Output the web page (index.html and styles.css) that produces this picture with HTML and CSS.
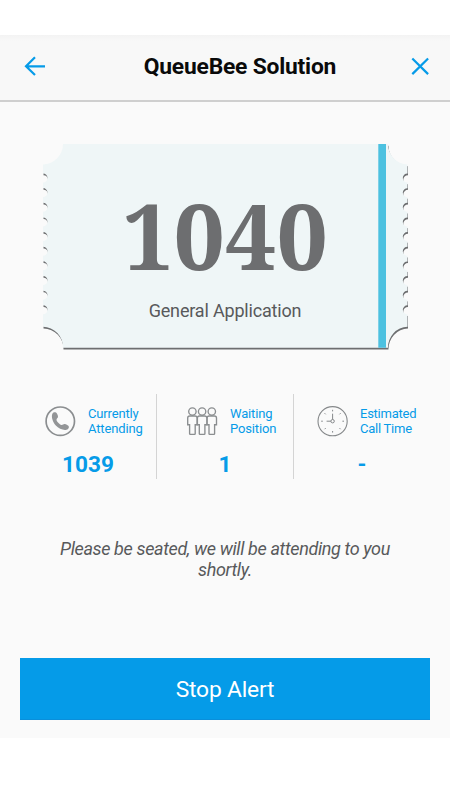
FILE: index.html
```html
<!DOCTYPE html>
<html lang="en">
<head>
<meta charset="utf-8">
<title>QueueBee Solution</title>
<link rel="stylesheet" href="styles.css">
</head>
<body>
<main class="screen">
  <header class="bar">
    <svg class="icon" width="22" height="22" viewBox="0 0 22 22"><path d="M21 11.3H2.5M11 2.2L2 11.3l9 8.7"/></svg>
    <h1 class="title">QueueBee Solution</h1>
    <svg class="icon" width="20" height="20" viewBox="0 0 20 20"><path d="M2.3 2.5l15.8 15.6M18.1 2.5L2.3 18.1"/></svg>
  </header>
  <section class="ticket">
    <svg class="ticket-shape" width="366" height="207" viewBox="0 0 366 207">
      <defs>
        <path id="stub" d="M20 0H345A20.5 20.5 0 0 0 364.5 20.5V29.5a4.7 4.5 0 0 0 0 9v5.65a4.7 4.5 0 0 0 0 9v5.65a4.7 4.5 0 0 0 0 9v5.65a4.7 4.5 0 0 0 0 9v5.65a4.7 4.5 0 0 0 0 9v5.65a4.7 4.5 0 0 0 0 9v5.65a4.7 4.5 0 0 0 0 9v5.65a4.7 4.5 0 0 0 0 9v5.65a4.7 4.5 0 0 0 0 9v5.65a4.7 4.5 0 0 0 0 9V182.7A20.5 20.5 0 0 0 345 203.7H20A20.5 20.5 0 0 0 0 182.7V170.3a4.5 4.5 0 0 0 0-9v-5.65a4.5 4.5 0 0 0 0-9v-5.65a4.5 4.5 0 0 0 0-9v-5.65a4.5 4.5 0 0 0 0-9v-5.65a4.5 4.5 0 0 0 0-9v-5.65a4.5 4.5 0 0 0 0-9v-5.65a4.5 4.5 0 0 0 0-9v-5.65a4.5 4.5 0 0 0 0-9v-5.65a4.5 4.5 0 0 0 0-9v-5.65a4.5 4.5 0 0 0 0-9V20.5A20.5 20.5 0 0 0 20 0z"/>
      </defs>
      <use href="#stub" x=".5" y="1.7" fill="#6d6e70"/>
      <use href="#stub" fill="#eff6f7"/>
      <path d="M335.3 0h7.7v203.7h-7.7z" fill="#4cc1e0"/>
    </svg>
    <div class="ticket-text">
      <div class="number">1040</div>
      <div class="service">General Application</div>
    </div>
  </section>
  <section class="stats">
    <div class="stat">
      <div class="stat-head">
        <svg width="32" height="32" viewBox="0 0 32 32"><circle cx="16.3" cy="15.2" r="14.2" fill="none" stroke="#8b8e90" stroke-width="1.7"/><path transform="translate(.2 -.8)" d="M8.2 8.5c.9-1.6 2.6-1.7 3.6-1.1 1 .7 2.2 3.2 2 4.4-.2 1.1-1.5 1.6-1.5 2.7 0 1.7 3.1 4.9 5 5.2 1.2.2 2-1.1 3.2-.9 1.3.2 4 1.5 4.2 2.7.2 1.4-1.1 2.8-2.5 3.1-3 .8-7.8-1.2-10.6-4.2-2.9-3.1-4.9-9.2-3.4-11.9z" fill="#939597"/></svg>
        <span class="label">Currently<br>Attending</span>
      </div>
      <div class="value">1039</div>
    </div>
    <div class="stat">
      <div class="stat-head">
        <svg width="32" height="32" viewBox="0 0 32 32">
          <defs><g id="person"><circle cx="6.4" cy="5.5" r="3.7"/><path d="M3.8 10h5.2q2.1 0 2.1 2v6.7H9.2v9q0 .7-.7.7H4.3q-.7 0-.7-.7v-9H1.7v-6.7q0-2 2.1-2z"/></g></defs>
          <g fill="#fafafa" stroke="#8b8e90" stroke-width="1.35"><use href="#person" x="0"/><use href="#person" x="19.4"/><use href="#person" x="9.7"/></g>
        </svg>
        <span class="label">Waiting<br>Position</span>
      </div>
      <div class="value">1</div>
    </div>
    <div class="stat">
      <div class="stat-head">
        <svg width="32" height="32" viewBox="0 0 32 32" fill="none" stroke="#85888a"><g transform="translate(-.4 -.8)"><circle cx="16" cy="16" r="14.6" stroke-width="1.1"/><circle cx="16" cy="16" r="1.7" fill="#fafafa"/><path d="M16 14.3V8.5M14.3 16H10"/><path d="M16 4.6v1.6M16 25.8v1.6M4.6 16h1.6M25.8 16h1.6M8 8l1.1 1.1M22.9 22.9L24 24M8 24l1.1-1.1M22.9 9.1L24 8"/></g></svg>
        <span class="label">Estimated<br>Call Time</span>
      </div>
      <div class="value">-</div>
    </div>
  </section>
  <p class="message">Please be seated, we will be attending to you shortly.</p>
  <button class="stop">Stop Alert</button>
</main>
</body>
</html>
```

FILE: styles.css
```css
* { box-sizing: border-box; }

body {
  margin: 0;
  padding-top: 35px;
  background: #fff;
  font-family: Roboto, "Liberation Sans", sans-serif;
}

.screen {
  height: 703px;
  background: #fafafa;
}

.bar {
  display: grid;
  grid-template-columns: 22px 1fr 20px;
  align-items: center;
  height: 67px;
  padding: 0 20px 4px 24px;
  background: linear-gradient(#f3f3f3, #f8f8f8 6px);
  border-bottom: 2px solid #cfcfcf;
}

.title {
  margin: 0;
  padding: 3px 0 0 24px;
  font-size: 22.8px;
  line-height: 28px;
  font-weight: 700;
  letter-spacing: -.2px;
  text-align: center;
  color: #0a0a0a;
  white-space: nowrap;
}

.icon {
  display: block;
  fill: none;
  stroke: #069be8;
  stroke-width: 2.2;
}

.ticket {
  display: grid;
  width: 366px;
  height: 207px;
  margin: 42px 0 0 43px;
}

.ticket-shape,
.ticket-text {
  grid-area: 1 / 1;
}

.ticket-text {
  text-align: center;
  padding: 36px 2px 0 0;
}

.number {
  height: 110px;
  line-height: 110px;
  font-family: "Droid Serif", "Noto Serif", "DejaVu Serif Condensed", "DejaVu Serif", serif;
  font-size: 91px;
  font-weight: 700;
  color: #6d6e70;
}

.service {
  margin-top: 10px;
  font-size: 18px;
  line-height: 22px;
  letter-spacing: -.18px;
  color: #58595b;
}

.stats {
  display: grid;
  grid-template-columns: 136px 137px 137px;
  height: 85px;
  margin: 43px 0 0 20px;
}

.stat + .stat {
  border-left: 1px solid #d4d4d4;
}

.stat-head {
  display: flex;
  align-items: center;
  gap: 12px;
  padding: 12px 0 0 24px;
}

.stat + .stat .stat-head { padding-left: 29px; }
.stat:last-child .stat-head { padding-left: 23px; gap: 11px; }

.label {
  font-size: 13px;
  line-height: 14.6px;
  letter-spacing: -.15px;
  color: #069be8;
  white-space: nowrap;
}

.stat:last-child .label { letter-spacing: -.25px; }

.value {
  margin-top: 13px;
  font-size: 22.6px;
  line-height: 28px;
  font-weight: 700;
  text-align: center;
  color: #069be8;
}

.message {
  width: 350px;
  margin: 60px auto 0;
  font-size: 18px;
  line-height: 20.5px;
  letter-spacing: -.37px;
  font-style: italic;
  text-align: center;
  color: #58595b;
}

.stop {
  display: block;
  width: 410px;
  height: 62px;
  margin: 78px auto 0;
  padding: 2px 0 0;
  border: 0;
  border-bottom: 1px solid #0a8fdb;
  background: #059be8;
  color: #fff;
  font-family: inherit;
  font-size: 22.8px;
  letter-spacing: -.2px;
}
```
